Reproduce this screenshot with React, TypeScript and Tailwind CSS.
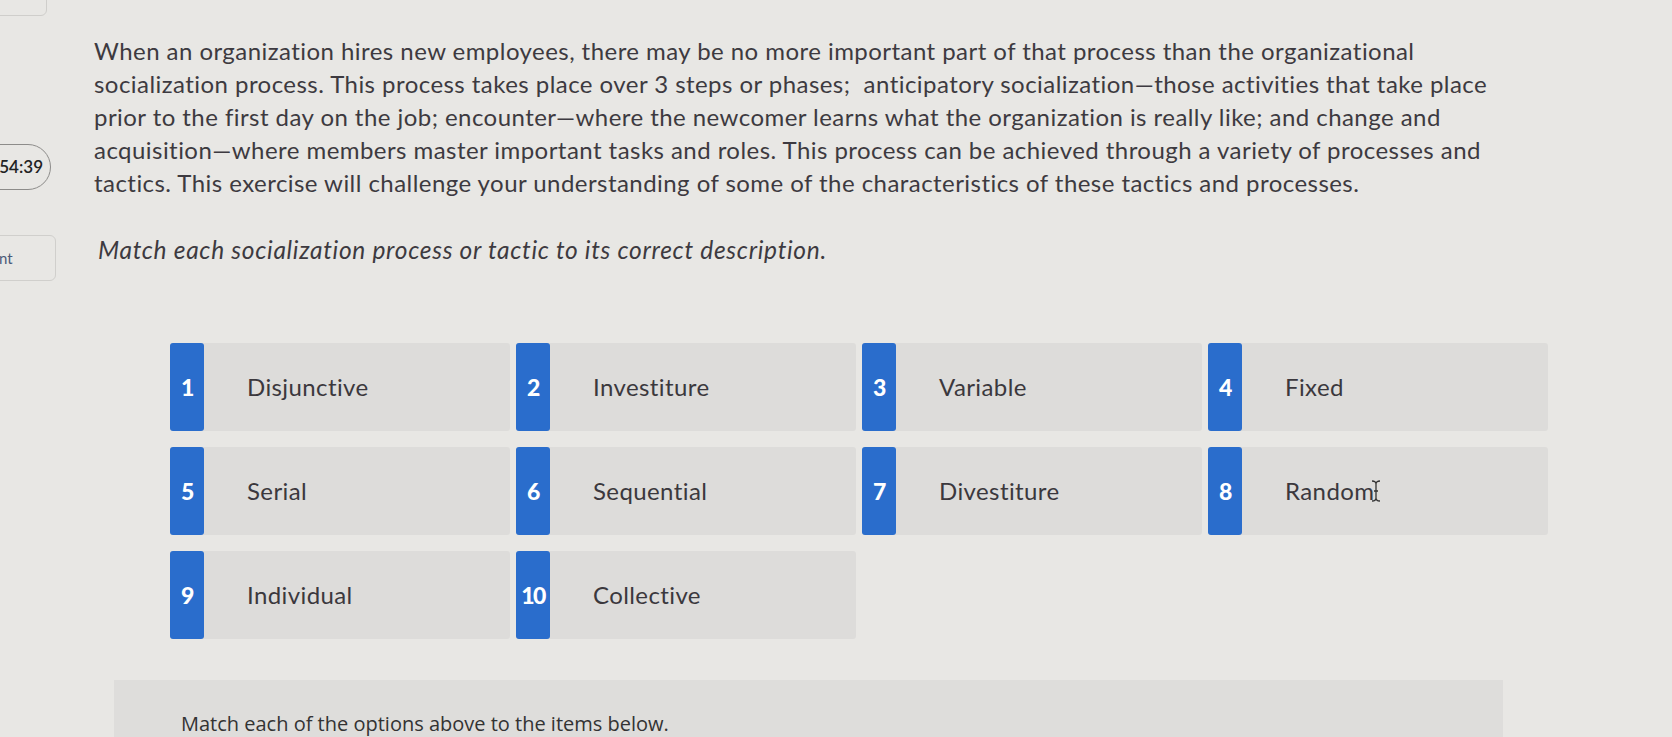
import React from "react";

const items = [
  { n: "1", label: "Disjunctive" },
  { n: "2", label: "Investiture" },
  { n: "3", label: "Variable" },
  { n: "4", label: "Fixed" },
  { n: "5", label: "Serial" },
  { n: "6", label: "Sequential" },
  { n: "7", label: "Divestiture" },
  { n: "8", label: "Random" },
  { n: "9", label: "Individual" },
  { n: "10", label: "Collective" },
];

const lines = [
  "When an organization hires new employees, there may be no more important part of that process than the organizational",
  "socialization process. This process takes place over 3 steps or phases;  anticipatory socialization\u2014those activities that take place",
  "prior to the first day on the job; encounter\u2014where the newcomer learns what the organization is really like; and change and",
  "acquisition\u2014where members master important tasks and roles. This process can be achieved through a variety of processes and",
  "tactics. This exercise will challenge your understanding of some of the characteristics of these tactics and processes.",
];

function Card({ n, label }: { n: string; label: string }) {
  return (
    <div className="flex h-[88px] bg-[#dddcda] rounded-[3px]">
      <div className="w-[34px] shrink-0 bg-[#2a6dcc] rounded-[3px] flex items-center justify-center text-white font-black text-[23px] tracking-[-1.5px] font-['Lato',sans-serif]">
        {n}
      </div>
      <div className="flex items-center pl-[43px] text-[24px] tracking-[0.4px] text-[#3b383d] font-['Lato',sans-serif]">
        {label}
        {label === "Random" && (
          <svg width="10" height="24" viewBox="0 0 10 22" className="ml-[-3px]">
            <path d="M1 1 Q5 1 5 4 L5 18 Q5 21 1 21 M9 1 Q5 1 5 4 M5 18 Q5 21 9 21 M3 11 L7 11" stroke="#333" strokeWidth="1.3" fill="none" />
          </svg>
        )}
      </div>
    </div>
  );
}

export default function App() {
  return (
    <div className="w-[1672px] h-[737px] overflow-hidden bg-[#e8e7e4] flex font-['Lato',sans-serif]">
      <div className="w-[94px] shrink-0 flex flex-col">
        <div className="ml-[-20px] mt-[-30px] w-[67px] h-[46px] border border-[#cfcecb] rounded-[6px]" />
        <div className="ml-[-40px] mt-[128px] w-[91px] h-[46px] border border-[#8d8c8a] rounded-full flex items-center justify-end pr-[7px] text-[17px] font-semibold text-[#222] font-['Lato',sans-serif]">
          <span className="ml-[-4px]">54:39</span>
        </div>
        <div className="ml-[-40px] mt-[45px] w-[96px] h-[46px] border border-[#d0cfcc] rounded-[6px] flex items-center pl-[38px] text-[15px] text-[#4a5a78]">
          nt
        </div>
      </div>
      <div className="flex-1 flex flex-col">
        <div className="pt-[34px] text-[24px] leading-[33px] text-[#3d3a40] tracking-[0.45px]">
          {lines.map((l, i) => (
            <div key={i} className="whitespace-pre">{l}</div>
          ))}
        </div>
        <div className="mt-[34px] pl-[4px] italic text-[24.5px] leading-[33px] tracking-[0.7px] text-[#3d3a40]">
          Match each socialization process or tactic to its correct description.
        </div>
        <div className="mt-[77px] ml-[76px] w-[1378px] grid grid-cols-4 gap-x-[6px] gap-y-[16px]">
          {items.map((it) => (
            <Card key={it.n} n={it.n} label={it.label} />
          ))}
        </div>
        <div className="mt-[41px] ml-[20px] w-[1389px] h-[80px] bg-[#dedddb] pt-[29px] pl-[67px] text-[20px] text-[#333] font-['Open_Sans',sans-serif]">
          Match each of the options above to the items below.
        </div>
      </div>
    </div>
  );
}
